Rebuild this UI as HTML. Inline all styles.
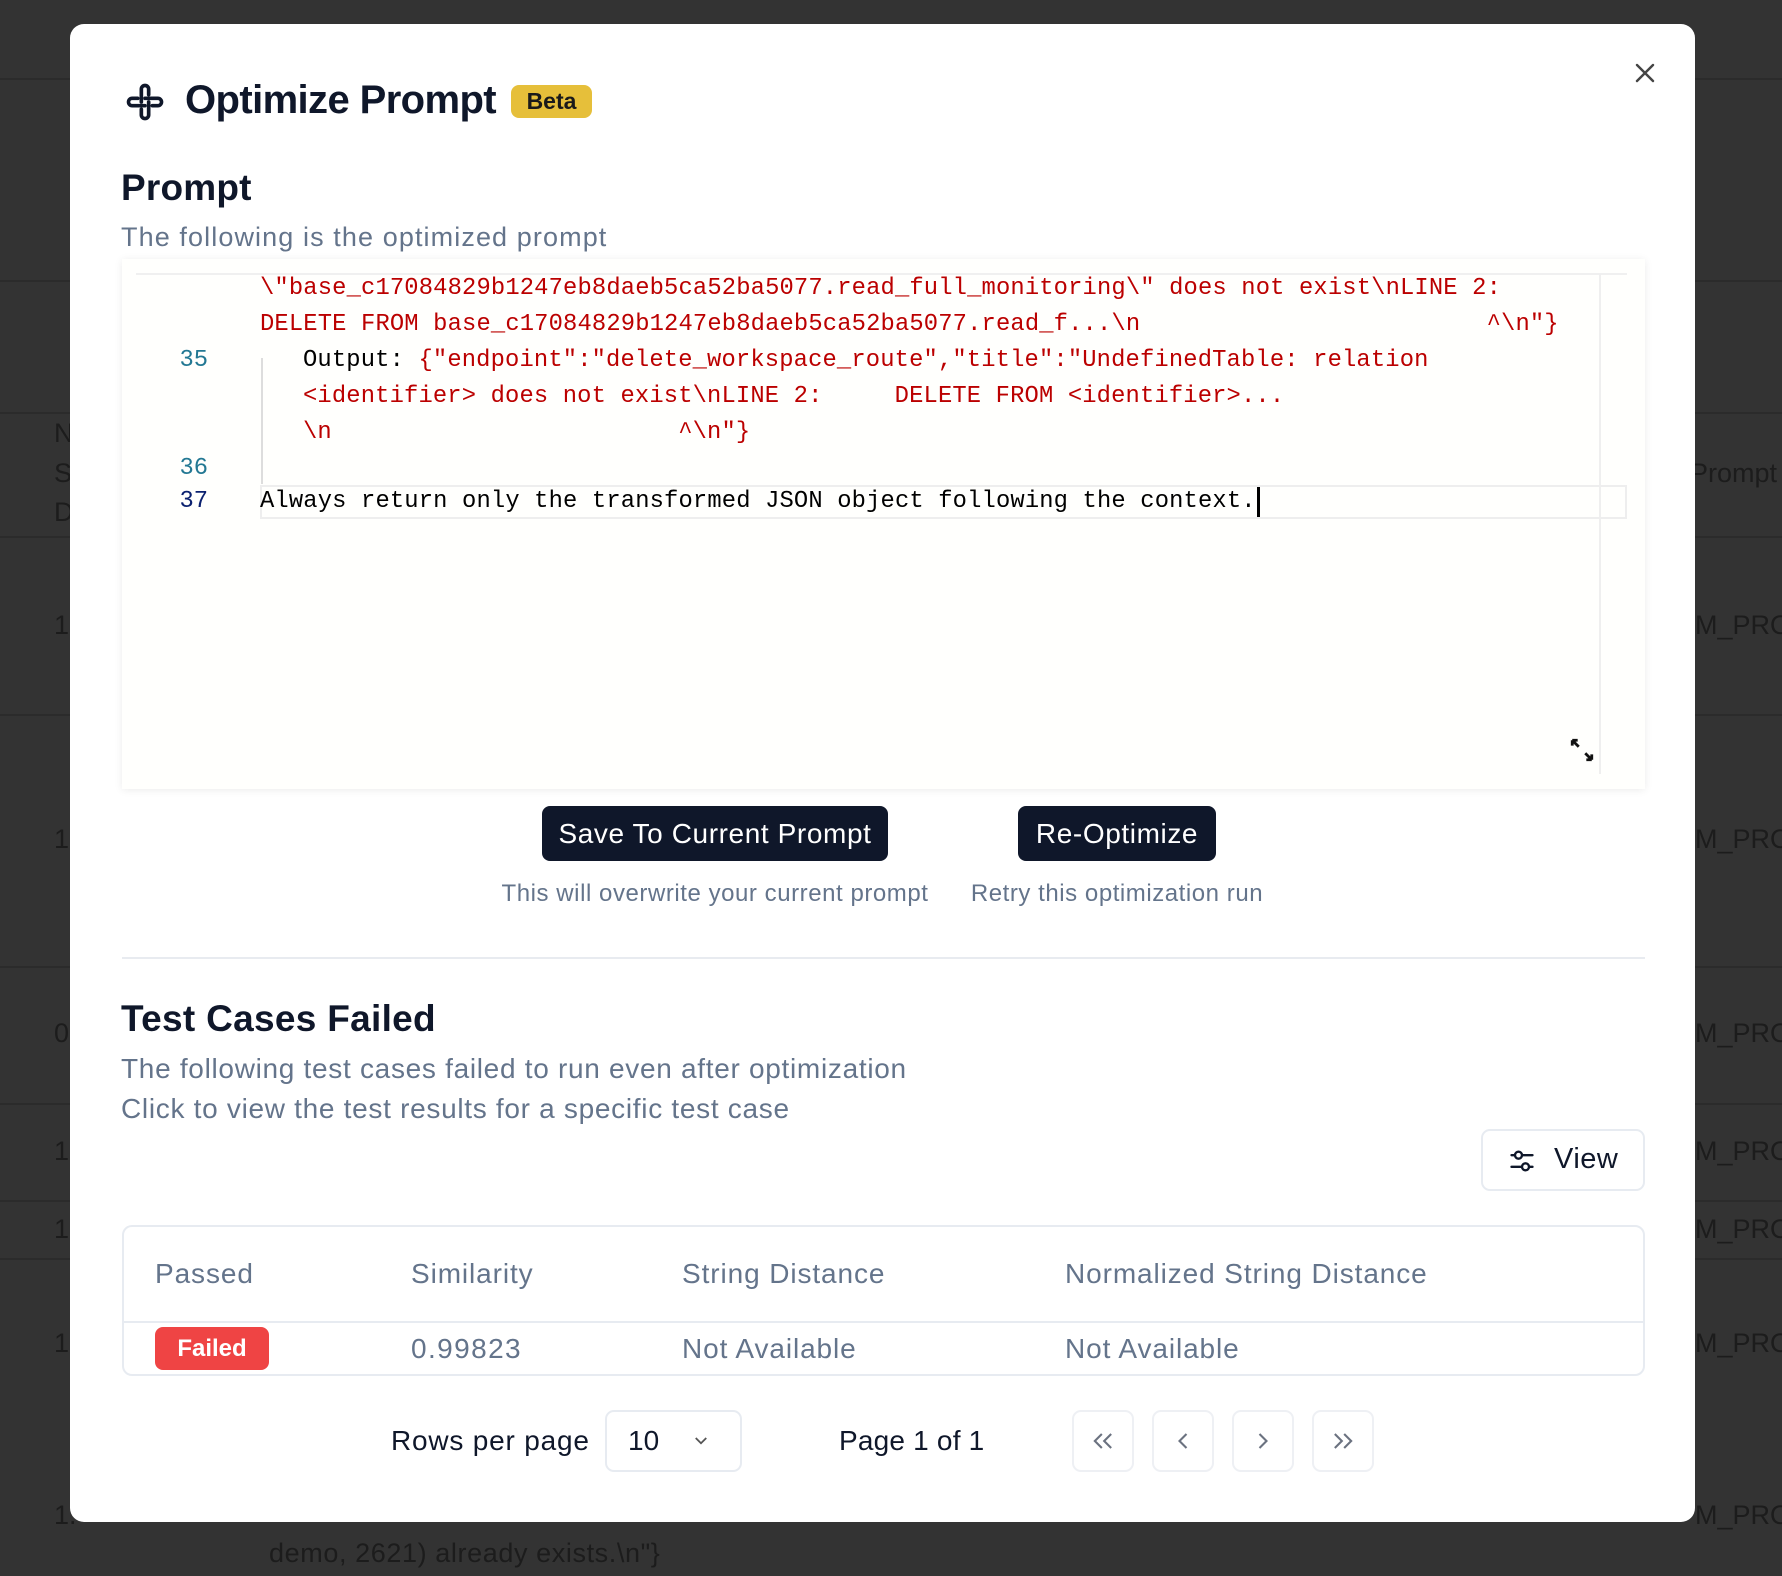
<!DOCTYPE html>
<html><head><meta charset="utf-8"><style>
*{margin:0;padding:0;box-sizing:border-box}
body{width:1782px;height:1576px;background:#333;position:relative;overflow:hidden;font-family:"Liberation Sans",sans-serif}
.a{position:absolute;white-space:nowrap}
.bg{color:#1c1c1c;font-size:27px}
.hl{position:absolute;left:0;width:1782px;height:2px;background:#2b2b2b}
.modal{position:absolute;left:70px;top:24px;width:1625px;height:1498px;background:#fff;border-radius:14px}
.mono{font-family:"Liberation Mono",monospace;font-size:23.8px;color:#b00;line-height:36px;white-space:pre;letter-spacing:0.15px}
.mono .k{color:#000}
.ln{position:absolute;width:60px;text-align:right;font-family:"Liberation Mono",monospace;font-size:23.8px;line-height:36px;color:#237893}
.btn{position:absolute;background:#0f172a;color:#fff;border-radius:8px;font-size:28px;letter-spacing:0.6px;display:flex;align-items:center;justify-content:center}
.cap{position:absolute;color:#64748b;font-size:24px;letter-spacing:0.55px;text-align:center}
.muted{color:#64748b}
.tb{font-size:28px;letter-spacing:0.9px}
.pg{position:absolute;top:1410px;width:62px;height:62px;border:2px solid #eef0f4;border-radius:9px;display:flex;align-items:center;justify-content:center}
</style></head><body>
<div class="hl" style="top:78px"></div>
<div class="hl" style="top:280px"></div>
<div class="hl" style="top:412px"></div>
<div class="hl" style="top:536px"></div>
<div class="hl" style="top:714px"></div>
<div class="hl" style="top:966px"></div>
<div class="hl" style="top:1103px"></div>
<div class="hl" style="top:1200px"></div>
<div class="hl" style="top:1258px"></div>
<div class="a bg" style="left:54px;top:418px">N</div>
<div class="a bg" style="left:54px;top:458px">S</div>
<div class="a bg" style="left:54px;top:497px">D</div>
<div class="a bg" style="left:54px;top:610px">1.</div>
<div class="a bg" style="left:54px;top:824px">1.</div>
<div class="a bg" style="left:54px;top:1018px">0</div>
<div class="a bg" style="left:54px;top:1136px">1.</div>
<div class="a bg" style="left:54px;top:1214px">1.</div>
<div class="a bg" style="left:54px;top:1328px">1.</div>
<div class="a bg" style="left:54px;top:1500px">1.</div>
<div class="a bg" style="left:1690px;top:458px">Prompt</div>
<div class="a bg" style="left:1695px;top:610px">M_PRO</div>
<div class="a bg" style="left:1695px;top:824px">M_PRO</div>
<div class="a bg" style="left:1695px;top:1018px">M_PRO</div>
<div class="a bg" style="left:1695px;top:1136px">M_PRO</div>
<div class="a bg" style="left:1695px;top:1214px">M_PRO</div>
<div class="a bg" style="left:1695px;top:1328px">M_PRO</div>
<div class="a bg" style="left:1695px;top:1500px">M_PRO</div>
<div class="a bg" style="left:269px;top:1538px;letter-spacing:0.6px">demo, 2621) already exists.\n"}</div>

<div class="modal"></div>
<svg class="a" style="left:122px;top:80px" width="46" height="44" viewBox="0 0 24 24" fill="none" stroke="#0f172a" stroke-width="2" stroke-linecap="round" stroke-linejoin="round">
<path d="M10 12V5a2 2 0 0 1 4 0v3"/>
<path d="M12 10h7a2 2 0 0 1 0 4h-3"/>
<path d="M14 12v7a2 2 0 0 1-4 0v-3"/>
<path d="M12 14H5a2 2 0 0 1 0-4h3"/>
</svg>
<div class="a" style="left:185px;top:78px;font-size:40px;font-weight:bold;color:#0f172a;letter-spacing:-0.6px">Optimize Prompt</div>
<div class="a" style="left:511px;top:85px;width:81px;height:33px;background:#e6bf3a;border-radius:8px;font-size:23px;font-weight:bold;color:#1a1a1a;display:flex;align-items:center;justify-content:center">Beta</div>
<svg class="a" style="left:1633px;top:61px" width="24" height="24" viewBox="0 0 24 24" stroke="#444" stroke-width="2.4" stroke-linecap="round"><path d="M4 4l16 16M20 4L4 20"/></svg>

<div class="a" style="left:121px;top:167px;font-size:37px;font-weight:bold;color:#0f172a;letter-spacing:0.2px">Prompt</div>
<div class="a muted" style="left:121px;top:222px;font-size:27px;letter-spacing:1.1px">The following is the optimized prompt</div>

<div class="a" style="left:122px;top:259px;width:1523px;height:530px;background:#fffffd;box-shadow:0 1px 8px rgba(0,0,0,0.08)"></div>
<div class="a" style="left:136px;top:273px;width:1491px;height:2px;background:#f0f0f0"></div>
<div class="a" style="left:1599px;top:274px;width:2px;height:500px;background:#efefef"></div>
<div class="a" style="left:261px;top:358px;width:2px;height:126px;background:#ddd"></div>
<div class="a" style="left:260px;top:485px;width:1367px;height:34px;border:2px solid #eee"></div>
<div class="a mono" style="left:260px;top:271px">\"base_c17084829b1247eb8daeb5ca52ba5077.read_full_monitoring\" does not exist\nLINE 2:</div>
<div class="a mono" style="left:260px;top:307px">DELETE FROM base_c17084829b1247eb8daeb5ca52ba5077.read_f...\n                        ^\n"}</div>
<div class="ln" style="left:148px;top:343px">35</div>
<div class="a mono" style="left:303px;top:343px"><span class="k">Output: </span>{"endpoint":"delete_workspace_route","title":"UndefinedTable: relation</div>
<div class="a mono" style="left:303px;top:379px">&lt;identifier&gt; does not exist\nLINE 2:     DELETE FROM &lt;identifier&gt;...</div>
<div class="a mono" style="left:303px;top:415px">\n                        ^\n"}</div>
<div class="ln" style="left:148px;top:451px">36</div>
<div class="ln" style="left:148px;top:484px;color:#0b216f">37</div>
<div class="a mono" style="left:260px;top:484px;color:#000">Always return only the transformed JSON object following the context.</div>
<div class="a" style="left:1257px;top:487px;width:3px;height:30px;background:#000"></div>
<svg class="a" style="left:1569px;top:737px" width="26" height="26" viewBox="0 0 24 24" stroke="#111" stroke-width="2.6" fill="none"><path d="M3 3l6 6M3 3v5M3 3h5M21 21l-6-6M21 21v-5M21 21h-5"/></svg>

<div class="btn" style="left:542px;top:806px;width:346px;height:55px">Save To Current Prompt</div>
<div class="btn" style="left:1018px;top:806px;width:198px;height:55px">Re-Optimize</div>
<div class="cap" style="left:465px;top:880px;width:500px">This will overwrite your current prompt</div>
<div class="cap" style="left:917px;top:880px;width:400px">Retry this optimization run</div>
<div class="a" style="left:122px;top:957px;width:1523px;height:2px;background:#e8ebf0"></div>

<div class="a" style="left:121px;top:998px;font-size:37px;font-weight:bold;color:#0f172a;letter-spacing:0.3px">Test Cases Failed</div>
<div class="a muted" style="left:121px;top:1053px;font-size:28px;letter-spacing:0.7px">The following test cases failed to run even after optimization</div>
<div class="a muted" style="left:121px;top:1093px;font-size:28px;letter-spacing:0.7px">Click to view the test results for a specific test case</div>

<div class="a" style="left:1481px;top:1129px;width:164px;height:62px;border:2px solid #e7ebf1;border-radius:9px"></div>
<svg class="a" style="left:1507px;top:1147px" width="30" height="28" viewBox="0 0 24 24" fill="none" stroke="#0f172a" stroke-width="2" stroke-linecap="round"><path d="M3 7h3M12 7h9M3 17h9M18 17h3"/><circle cx="9" cy="7" r="3"/><circle cx="15" cy="17" r="3"/></svg>
<div class="a" style="left:1554px;top:1143px;font-size:29px;color:#0f172a;letter-spacing:0.5px">View</div>

<div class="a" style="left:122px;top:1225px;width:1523px;height:151px;border:2px solid #e7ebf1;border-radius:10px"></div>
<div class="a" style="left:123px;top:1321px;width:1521px;height:2px;background:#e7ebf1"></div>
<div class="a muted tb" style="left:155px;top:1258px">Passed</div>
<div class="a muted tb" style="left:411px;top:1258px">Similarity</div>
<div class="a muted tb" style="left:682px;top:1258px">String Distance</div>
<div class="a muted tb" style="left:1065px;top:1258px">Normalized String Distance</div>
<div class="a" style="left:155px;top:1327px;width:114px;height:43px;background:#ef4444;border-radius:8px;color:#fff;font-size:24px;font-weight:bold;display:flex;align-items:center;justify-content:center">Failed</div>
<div class="a muted tb" style="left:411px;top:1333px;letter-spacing:1.4px">0.99823</div>
<div class="a muted tb" style="left:682px;top:1333px">Not Available</div>
<div class="a muted tb" style="left:1065px;top:1333px">Not Available</div>

<div class="a" style="left:391px;top:1425px;font-size:28px;color:#0f172a;letter-spacing:0.8px">Rows per page</div>
<div class="a" style="left:605px;top:1410px;width:137px;height:62px;border:2px solid #e7ebf1;border-radius:9px"></div>
<div class="a" style="left:628px;top:1425px;font-size:28px;color:#0f172a">10</div>
<svg class="a" style="left:690px;top:1432px" width="22" height="18" viewBox="0 0 24 24" fill="none" stroke="#555" stroke-width="2.4"><path d="M5 8l7 7 7-7"/></svg>
<div class="a" style="left:839px;top:1425px;font-size:28px;color:#0f172a;letter-spacing:0.2px">Page 1 of 1</div>
<div class="pg" style="left:1072px"><svg width="28" height="28" viewBox="0 0 24 24" fill="none" stroke="#6b7280" stroke-width="1.8"><path d="M11 6l-6 6 6 6M19 6l-6 6 6 6"/></svg></div>
<div class="pg" style="left:1152px"><svg width="28" height="28" viewBox="0 0 24 24" fill="none" stroke="#6b7280" stroke-width="1.8"><path d="M15 6l-6 6 6 6"/></svg></div>
<div class="pg" style="left:1232px"><svg width="28" height="28" viewBox="0 0 24 24" fill="none" stroke="#6b7280" stroke-width="1.8"><path d="M9 6l6 6-6 6"/></svg></div>
<div class="pg" style="left:1312px"><svg width="28" height="28" viewBox="0 0 24 24" fill="none" stroke="#6b7280" stroke-width="1.8"><path d="M5 6l6 6-6 6M13 6l6 6-6 6"/></svg></div>
</body></html>
